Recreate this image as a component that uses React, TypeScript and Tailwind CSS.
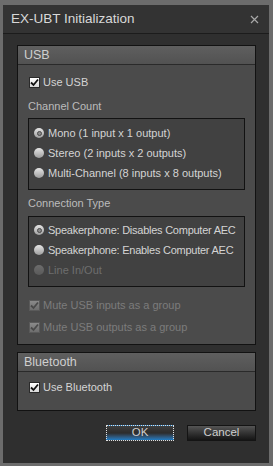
import React from "react";

const font = { fontFamily: '"Liberation Sans", Arial, sans-serif' };

function Check({ disabled }: { disabled?: boolean }) {
  return (
    <span
      className={
        "relative inline-flex h-[11px] w-[11px] shrink-0 items-center justify-center border " +
        (disabled
          ? "border-[#5a5a5a] bg-gradient-to-b from-[#8a8a8a] to-[#6e6e6e]"
          : "border-[#2a2a2a] bg-gradient-to-b from-[#ffffff] to-[#d8d8d8]")
      }
    >
      <svg width="9" height="9" viewBox="0 0 9 9">
        <path
          d="M1 4.5 L3.5 7 L8 1.5"
          fill="none"
          stroke={disabled ? "#4a4a4a" : "#111"}
          strokeWidth="1.8"
        />
      </svg>
    </span>
  );
}

function Radio({ checked, disabled }: { checked?: boolean; disabled?: boolean }) {
  return (
    <span
      className={
        "inline-flex h-[10px] w-[10px] shrink-0 items-center justify-center rounded-full " +
        (disabled
          ? "bg-gradient-to-b from-[#6c6c6c] to-[#5a5a5a]"
          : "bg-gradient-to-b from-[#e6e6e6] to-[#9e9e9e]")
      }
    >
      {checked && (
        <span className="h-[5px] w-[5px] rounded-full border border-[#4a4a4a] bg-[#8a8a8a]" />
      )}
    </span>
  );
}

function Group({ title, children }: { title: string; children: React.ReactNode }) {
  return (
    <div className="flex flex-col border border-[#121212] bg-[#4b4b4b]">
      <div className="flex h-[19px] items-center border-b border-[#2a2a2a] bg-gradient-to-b from-[#5f5f5f] to-[#525252] pl-[6px] text-[12.5px] leading-none text-[#cfcfcf]">
        {title}
      </div>
      {children}
    </div>
  );
}

export default function App() {
  return (
    <div
      className="h-[466px] w-[273px] whitespace-nowrap bg-[#6c6c6c] pb-[3px] pl-[3px] pr-[4px] pt-[5px]"
      style={font}
    >
      <div className="flex h-full flex-col bg-[#2f2f2f]">
        <div className="flex h-[29px] shrink-0 items-center justify-between border-b border-[#1c1c1c] bg-[#333333] pl-[8px] pr-[10px]">
          <span className="text-[13.5px] leading-none text-[#d8d8d8]">EX-UBT Initialization</span>
          <svg width="9" height="9" viewBox="0 0 9 9">
            <path d="M1 1 L8 8 M8 1 L1 8" stroke="#a8a8a8" strokeWidth="1.2" />
          </svg>
        </div>
        <div className="flex flex-col pl-[14px] pr-[13px] pt-[11px]">
          <Group title="USB">
            <div className="flex flex-col px-[10px] pb-[8px] pt-[8px] text-[11px] leading-none">
              <div className="flex h-[18px] items-center gap-[3px] pl-[1px] text-[#d4d4d4]">
                <Check />
                <span>Use USB</span>
              </div>
              <div className="mt-[6px] flex h-[18px] items-center text-[#bcbcbc]">Channel Count</div>
              <div className="mt-[3px] flex h-[72px] flex-col border border-[#121212] bg-[#414141] pl-[5px] pt-[4px] text-[#d4d4d4]">
                <div className="flex h-[20px] items-center gap-[4px]">
                  <Radio checked />
                  <span>Mono (1 input x 1 output)</span>
                </div>
                <div className="flex h-[20px] items-center gap-[4px]">
                  <Radio />
                  <span>Stereo (2 inputs x 2 outputs)</span>
                </div>
                <div className="flex h-[20px] items-center gap-[4px]">
                  <Radio />
                  <span>Multi-Channel (8 inputs x 8 outputs)</span>
                </div>
              </div>
              <div className="mt-[4px] flex h-[18px] items-center text-[#bcbcbc]">Connection Type</div>
              <div className="mt-[4px] flex h-[71px] flex-col border border-[#121212] bg-[#414141] pl-[5px] pt-[3px] text-[#d4d4d4]">
                <div className="flex h-[20px] items-center gap-[4px]">
                  <Radio checked />
                  <span className="tracking-[-0.25px]">Speakerphone: Disables Computer AEC</span>
                </div>
                <div className="flex h-[20px] items-center gap-[4px]">
                  <Radio />
                  <span className="tracking-[-0.25px]">Speakerphone: Enables Computer AEC</span>
                </div>
                <div className="flex h-[20px] items-center gap-[4px] text-[#6e6e6e]">
                  <Radio disabled />
                  <span>Line In/Out</span>
                </div>
              </div>
              <div className="mt-[9px] flex h-[18px] items-center gap-[3px] pl-[1px] text-[#7c7c7c]">
                <Check disabled />
                <span>Mute USB inputs as a group</span>
              </div>
              <div className="mt-[4px] flex h-[18px] items-center gap-[3px] pl-[1px] text-[#7c7c7c]">
                <Check disabled />
                <span>Mute USB outputs as a group</span>
              </div>
            </div>
          </Group>
          <div className="mt-[7px]">
            <Group title="Bluetooth">
              <div className="flex flex-col px-[10px] pb-[14px] pt-[6px] text-[11px] leading-none">
                <div className="flex h-[18px] items-center gap-[3px] pl-[1px] text-[#d4d4d4]">
                  <Check />
                  <span>Use Bluetooth</span>
                </div>
              </div>
            </Group>
          </div>
          <div className="mt-[14px] flex justify-end gap-[13px] text-[11.5px] leading-none">
            <button className="flex h-[16px] w-[68px] items-center justify-center border border-dotted border-[#e0e0e0] bg-gradient-to-b from-[#3e3e3e] via-[#2c2c2c] to-[#1c7cc4] text-[#cfcfcf]">
              OK
            </button>
            <button className="flex h-[16px] w-[69px] items-center justify-center border border-[#141414] bg-gradient-to-b from-[#555555] to-[#151515] text-[#cfcfcf]">
              Cancel
            </button>
          </div>
        </div>
      </div>
    </div>
  );
}
